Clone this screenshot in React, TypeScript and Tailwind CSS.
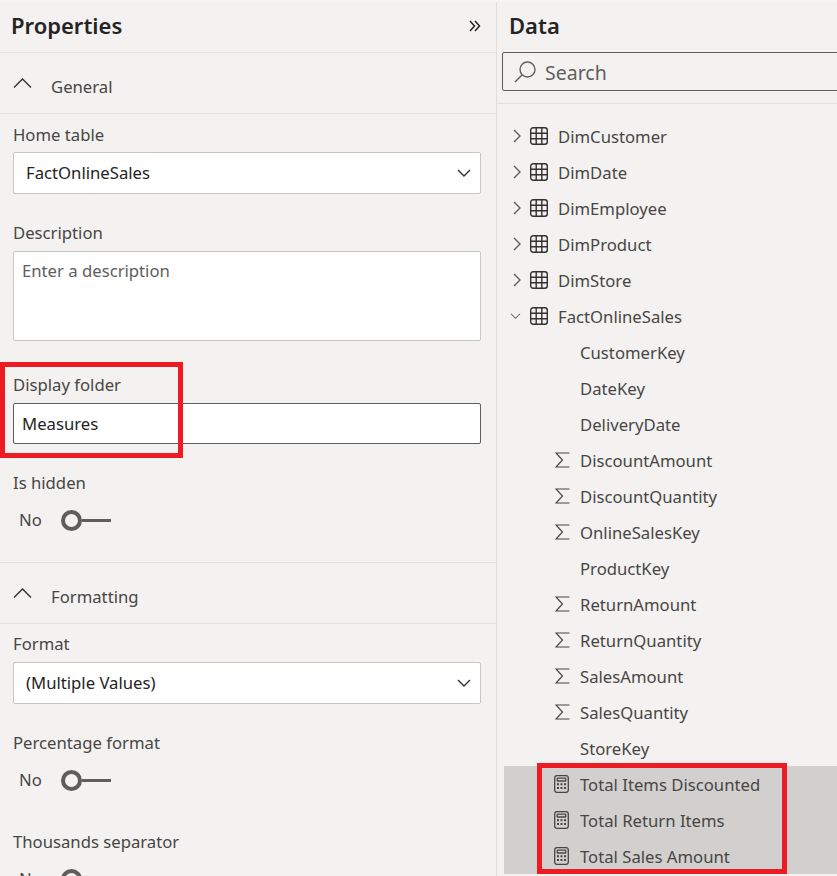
import React from "react";

function Chevron({ dir, className = "" }: { dir: "up" | "down" | "right"; className?: string }) {
  const d =
    dir === "up" ? "M1 10.5 L9.5 2 L18 10.5" : dir === "down" ? "M1 1 L7 7 L13 1" : "M1 1 L7 7 L1 13";
  const box = dir === "up" ? "0 0 19 12" : dir === "down" ? "0 0 14 8" : "0 0 8 14";
  const size = dir === "up" ? "w-[19px] h-[12px]" : dir === "down" ? "w-[14px] h-[8px]" : "w-[8px] h-[14px]";
  return (
    <svg viewBox={box} className={`${size} shrink-0 ${className}`} fill="none" stroke="currentColor" strokeWidth="1.4">
      <path d={d} />
    </svg>
  );
}

function Label({ children, className = "" }: { children: React.ReactNode; className?: string }) {
  return <div className={`text-[16.7px] leading-[24px] text-[#484644] ${className}`}>{children}</div>;
}

function Select({ value }: { value: string }) {
  return (
    <div className="mt-[6px] h-[42px] bg-white border border-[#c8c6c4] rounded-[2px] flex items-center justify-between pl-[12px] pr-[9px] text-[16.7px] text-[#252423]">
      <span>{value}</span>
      <Chevron dir="down" className="text-[#323130]" />
    </div>
  );
}

function Toggle({ className = "" }: { className?: string }) {
  return (
    <div className={`flex items-center pl-[6px] h-[24px] ${className}`}>
      <span className="text-[16.7px] leading-[24px] text-[#484644] w-[42px]">No</span>
      <span className="w-[21px] h-[21px] rounded-full border-[4px] border-[#605e5c] shrink-0" />
      <span className="w-[29px] h-[3px] bg-[#605e5c]" />
    </div>
  );
}

function Section({ title }: { title: string }) {
  return (
    <div className="h-[61px] border-b border-[#e1dfdd] flex items-center pl-[13px] shrink-0">
      <Chevron dir="up" className="text-[#323130] -mt-[1px]" />
      <span className="ml-[19px] pt-[8px] text-[16.7px] text-[#484644]">{title}</span>
    </div>
  );
}

function TableIcon() {
  return (
    <svg viewBox="0 0 18 18" className="w-[18px] h-[18px] text-[#323130]" fill="none" stroke="currentColor" strokeWidth="1.4">
      <rect x="0.7" y="0.7" width="16.6" height="16.6" rx="2.5" />
      <path d="M6.2 0.7V17.3M11.8 0.7V17.3M0.7 6.2H17.3M0.7 11.8H17.3" />
    </svg>
  );
}

function SigmaIcon() {
  return (
    <svg viewBox="0 0 15 16" className="ml-[1px] w-[15px] h-[16px] text-[#484644]" fill="none" stroke="currentColor" strokeWidth="1.2">
      <path d="M14.5 1H1L7.5 8L1 15H14.5" />
    </svg>
  );
}

function CalcIcon() {
  return (
    <svg viewBox="0 0 15 18" className="w-[15px] h-[18px] text-[#484644]" fill="none" stroke="currentColor" strokeWidth="1.3">
      <rect x="0.7" y="0.7" width="13.6" height="16.6" rx="2.4" />
      <rect x="3.2" y="3.2" width="8.6" height="2.8" rx="0.6" />
      <g fill="currentColor" stroke="none">
        <rect x="3" y="8.2" width="2" height="2" />
        <rect x="6.5" y="8.2" width="2" height="2" />
        <rect x="10" y="8.2" width="2" height="2" />
        <rect x="3" y="12" width="2" height="2" />
        <rect x="6.5" y="12" width="2" height="2" />
        <rect x="10" y="12" width="2" height="2" />
      </g>
    </svg>
  );
}

type RowKind = "closed" | "open" | "plain" | "sum" | "calc";

function Row({ name, kind }: { name: string; kind: RowKind }) {
  const isTable = kind === "closed" || kind === "open";
  return (
    <div className="h-[36px] flex items-center text-[16.7px] text-[#484644]">
      {isTable ? (
        <>
          <span className="w-[33px] flex items-center">
            {kind === "closed" ? (
              <Chevron dir="right" className="ml-[16px] text-[#605e5c]" />
            ) : (
              <Chevron dir="down" className="ml-[13px] !w-[11px] !h-[6px] text-[#605e5c]" />
            )}
          </span>
          <TableIcon />
          <span className="ml-[10px] pt-[2px]">{name}</span>
        </>
      ) : (
        <>
          <span className="ml-[57px] w-[26px] flex items-center">
            {kind === "sum" && <SigmaIcon />}
            {kind === "calc" && <CalcIcon />}
          </span>
          <span className="pt-[2px]">{name}</span>
        </>
      )}
    </div>
  );
}

const rows: [string, RowKind][] = [
  ["DimCustomer", "closed"],
  ["DimDate", "closed"],
  ["DimEmployee", "closed"],
  ["DimProduct", "closed"],
  ["DimStore", "closed"],
  ["FactOnlineSales", "open"],
  ["CustomerKey", "plain"],
  ["DateKey", "plain"],
  ["DeliveryDate", "plain"],
  ["DiscountAmount", "sum"],
  ["DiscountQuantity", "sum"],
  ["OnlineSalesKey", "sum"],
  ["ProductKey", "plain"],
  ["ReturnAmount", "sum"],
  ["ReturnQuantity", "sum"],
  ["SalesAmount", "sum"],
  ["SalesQuantity", "sum"],
  ["StoreKey", "plain"],
];

const calcs = ["Total Items Discounted", "Total Return Items", "Total Sales Amount"];

export default function App() {
  return (
    <div className="relative w-[837px] h-[876px] overflow-hidden bg-[#f3f2f1] flex font-['Noto_Sans',sans-serif]">
      {/* Properties */}
      <div className="w-[497px] shrink-0 border-r border-[#e1dfdd] flex flex-col">
        <div className="h-[53px] shrink-0 border-b border-[#e1dfdd] flex items-center justify-between pl-[11px] pr-[15px]">
          <span className="text-[22px] font-semibold text-[#252423] -mt-[2px]">Properties</span>
          <svg viewBox="0 0 12 12" className="w-[12px] h-[12px] text-[#252423]" fill="none" stroke="currentColor" strokeWidth="1.5">
            <path d="M1 1L5.5 6L1 11M6 1L10.5 6L6 11" />
          </svg>
        </div>
        <Section title="General" />
        <div className="pl-[13px] pr-[15px] pt-[8px] flex flex-col shrink-0">
          <Label className="pt-[1px] -mb-[1px]">Home table</Label>
          <Select value="FactOnlineSales" />
          <Label className="mt-[27px]">Description</Label>
          <div className="mt-[6px] h-[90px] bg-white border border-[#c8c6c4] rounded-[2px] px-[8px] py-[7px] text-[16.7px] leading-[24px] text-[#605e5c]">
            Enter a description
          </div>
          <Label className="mt-[32px]">Display folder</Label>
          <div className="mt-[6px] h-[41px] bg-white border border-[#605e5c] rounded-[2px] px-[8px] flex items-center text-[16.7px] text-[#252423]">
            Measures
          </div>
          <Label className="mt-[27px]">Is hidden</Label>
          <Toggle className="mt-[13px]" />
        </div>
        <div className="mt-[30px] border-t border-[#e1dfdd]" />
        <Section title="Formatting" />
        <div className="pl-[13px] pr-[15px] pt-[8px] flex flex-col shrink-0">
          <Label>Format</Label>
          <Select value="(Multiple Values)" />
          <Label className="mt-[27px]">Percentage format</Label>
          <Toggle className="mt-[13px]" />
          <Label className="mt-[38px]">Thousands separator</Label>
          <Toggle className="mt-[13px]" />
        </div>
      </div>

      {/* Data */}
      <div className="flex-1 min-w-0 flex flex-col">
        <div className="h-[52px] shrink-0 flex items-center pl-[12px]">
          <span className="text-[22px] font-semibold text-[#252423] -mt-[2px]">Data</span>
        </div>
        <div className="pl-[5px] h-[52px] border-b border-[#e1dfdd] shrink-0">
          <div className="w-[360px] h-[39px] border border-[#605e5c] rounded-[2px] flex items-center pl-[11px]">
            <svg viewBox="0 0 22 22" className="w-[22px] h-[22px] text-[#605e5c]" fill="none" stroke="currentColor" strokeWidth="1.4">
              <circle cx="13.5" cy="8.5" r="7.5" />
              <path d="M8 14L1 21" />
            </svg>
            <span className="ml-[9px] pt-[3px] text-[19.5px] text-[#605e5c]">Search</span>
          </div>
        </div>
        <div className="pt-[14px] flex flex-col">
          {rows.map(([n, k]) => (
            <Row key={n} name={n} kind={k} />
          ))}
          <div className="ml-[7px] bg-[#d1d0ce]">
            {calcs.map((n) => (
              <div key={n} className="-ml-[7px]">
                <Row name={n} kind="calc" />
              </div>
            ))}
          </div>
        </div>
      </div>

      {/* Annotations */}
      <div className="absolute left-0 right-0 top-0 h-[2px] bg-[#f6f5f4]" />
      <div className="absolute left-0 top-[362px] w-[183px] h-[96px] border-[5px] border-[#ed1c24]" />
      <div className="absolute left-[537px] top-[763px] w-[250px] h-[111px] border-[5px] border-[#ed1c24]" />
    </div>
  );
}
